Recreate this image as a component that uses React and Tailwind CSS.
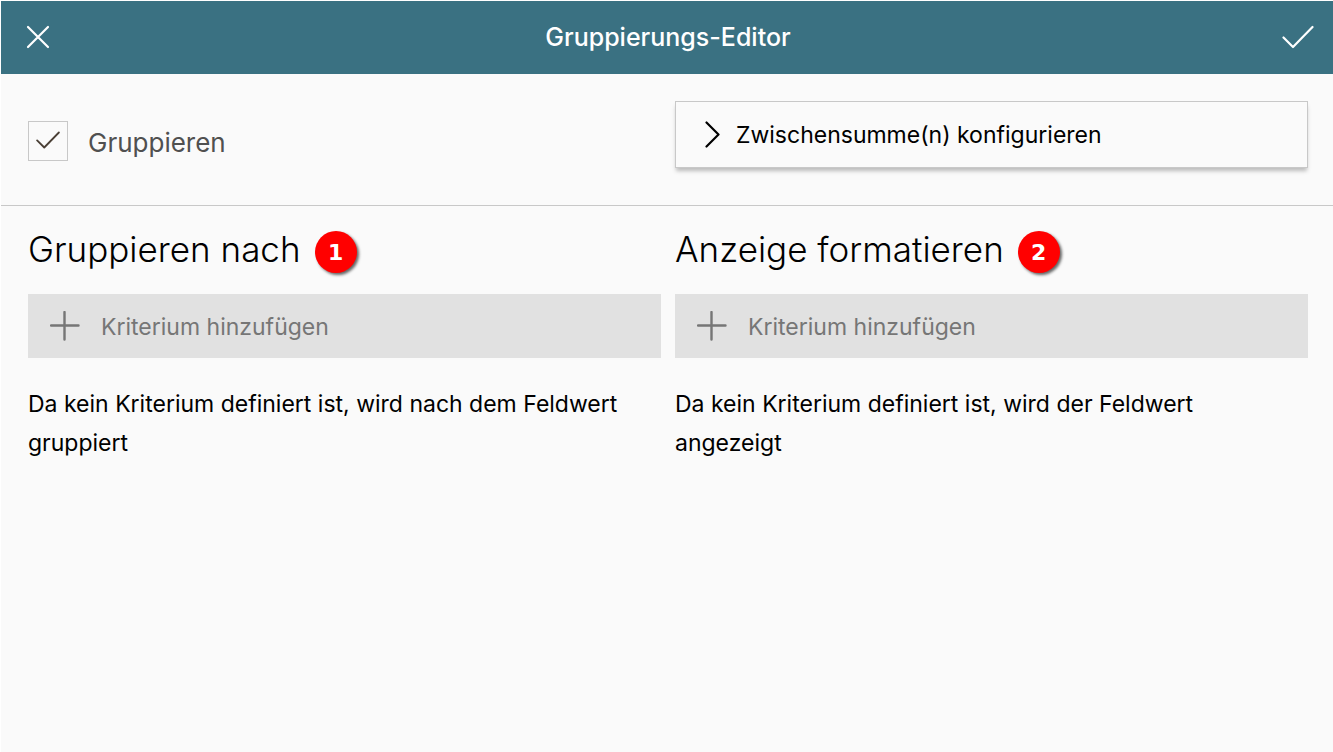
function CloseIcon() {
  return (
    <svg className="h-6 w-6" viewBox="0 0 24 24" fill="none" stroke="currentColor" strokeWidth="2.2" strokeLinecap="round" aria-hidden="true">
      <path d="M2 2l20 20M22 2L2 22" />
    </svg>
  );
}

function CheckIcon({ className, strokeWidth }) {
  return (
    <svg className={className} viewBox="0 0 32 24" fill="none" stroke="currentColor" strokeWidth={strokeWidth} strokeLinecap="round" strokeLinejoin="round" aria-hidden="true">
      <path d="M1.500 12.500L11 22L30.500 2" />
    </svg>
  );
}

function ChevronIcon() {
  return (
    <svg className="h-7 w-4" viewBox="0 0 16 28" fill="none" stroke="currentColor" strokeWidth="2.2" strokeLinecap="round" strokeLinejoin="round" aria-hidden="true">
      <path d="M2.500 1.500l12 12L2.500 25.500" />
    </svg>
  );
}

function PlusIcon() {
  return (
    <svg className="h-[30px] w-[30px]" viewBox="0 0 30 30" fill="none" stroke="currentColor" strokeWidth="2.4" strokeLinecap="round" aria-hidden="true">
      <path d="M14.500 1v27.500M1 14.500h27.500" />
    </svg>
  );
}

function CriteriaColumn({ title, badge, hint }) {
  return (
    <section>
      <div className="flex items-center gap-3.5 pb-0.5">
        <h2 className="text-[35px] leading-[86px] font-light">{title}</h2>
        <span className="mt-1.5 flex h-[42px] w-[42px] items-center justify-center rounded-full bg-[#ff0000] font-['DejaVu_Sans',sans-serif] text-[22px] font-bold text-white shadow-[2px_2px_3px_rgba(0,0,0,0.6)]">
          {badge}
        </span>
      </div>
      <button type="button" className="flex h-16 w-full items-center gap-[21px] bg-[#e1e1e1] px-[22px] text-[23px] text-[#767676]">
        <PlusIcon />
        <span className="pt-0.5">Kriterium hinzufügen</span>
      </button>
      <p className="mt-[27px] pr-6 text-[23px] leading-[39px]">{hint}</p>
    </section>
  );
}

export default function App() {
  return (
    <div className="min-h-screen border-t border-l border-white bg-[#fafafa] font-['Inter',sans-serif] text-black">
      <header className="flex h-[73px] items-center justify-between bg-[#3a7182] pr-[19px] pl-[25px] text-white">
        <button type="button" aria-label="Schließen" className="flex w-7 pb-0.5">
          <CloseIcon />
        </button>
        <h1 className="text-[25px] font-medium">Gruppierungs-Editor</h1>
        <button type="button" aria-label="Übernehmen" className="flex w-8 pb-0.5">
          <CheckIcon className="h-6 w-8" strokeWidth="2.2" />
        </button>
      </header>

      <div className="grid grid-cols-2 gap-[14px] border-b border-[#c8c8c8] pt-[27px] pr-[25px] pb-[37px] pl-[27px]">
        <label className="flex items-center gap-5 pt-3 text-[26px] text-[#505050]">
          <span className="relative flex h-10 w-10">
            <input type="checkbox" defaultChecked className="peer h-10 w-10 appearance-none border border-[#c8c8c8]" />
            <span className="pointer-events-none absolute inset-0 hidden items-center justify-center pb-0.5 text-[#4a3f35] peer-checked:flex">
              <CheckIcon className="h-[18px] w-6" strokeWidth="2.4" />
            </span>
          </span>
          <span className="pt-1">Gruppieren</span>
        </label>
        <button type="button" className="flex h-[67px] items-center gap-4 border border-[#c8c8c8] px-7 text-[23px] shadow-[0_4px_4px_-1px_rgba(0,0,0,0.25)]">
          <ChevronIcon />
          <span className="pt-0.5">Zwischensumme(n) konfigurieren</span>
        </button>
      </div>

      <main className="grid grid-cols-2 gap-[14px] pr-[25px] pl-[27px]">
        <CriteriaColumn
          title="Gruppieren nach"
          badge="1"
          hint="Da kein Kriterium definiert ist, wird nach dem Feldwert gruppiert"
        />
        <CriteriaColumn
          title="Anzeige formatieren"
          badge="2"
          hint="Da kein Kriterium definiert ist, wird der Feldwert angezeigt"
        />
      </main>
    </div>
  );
}
